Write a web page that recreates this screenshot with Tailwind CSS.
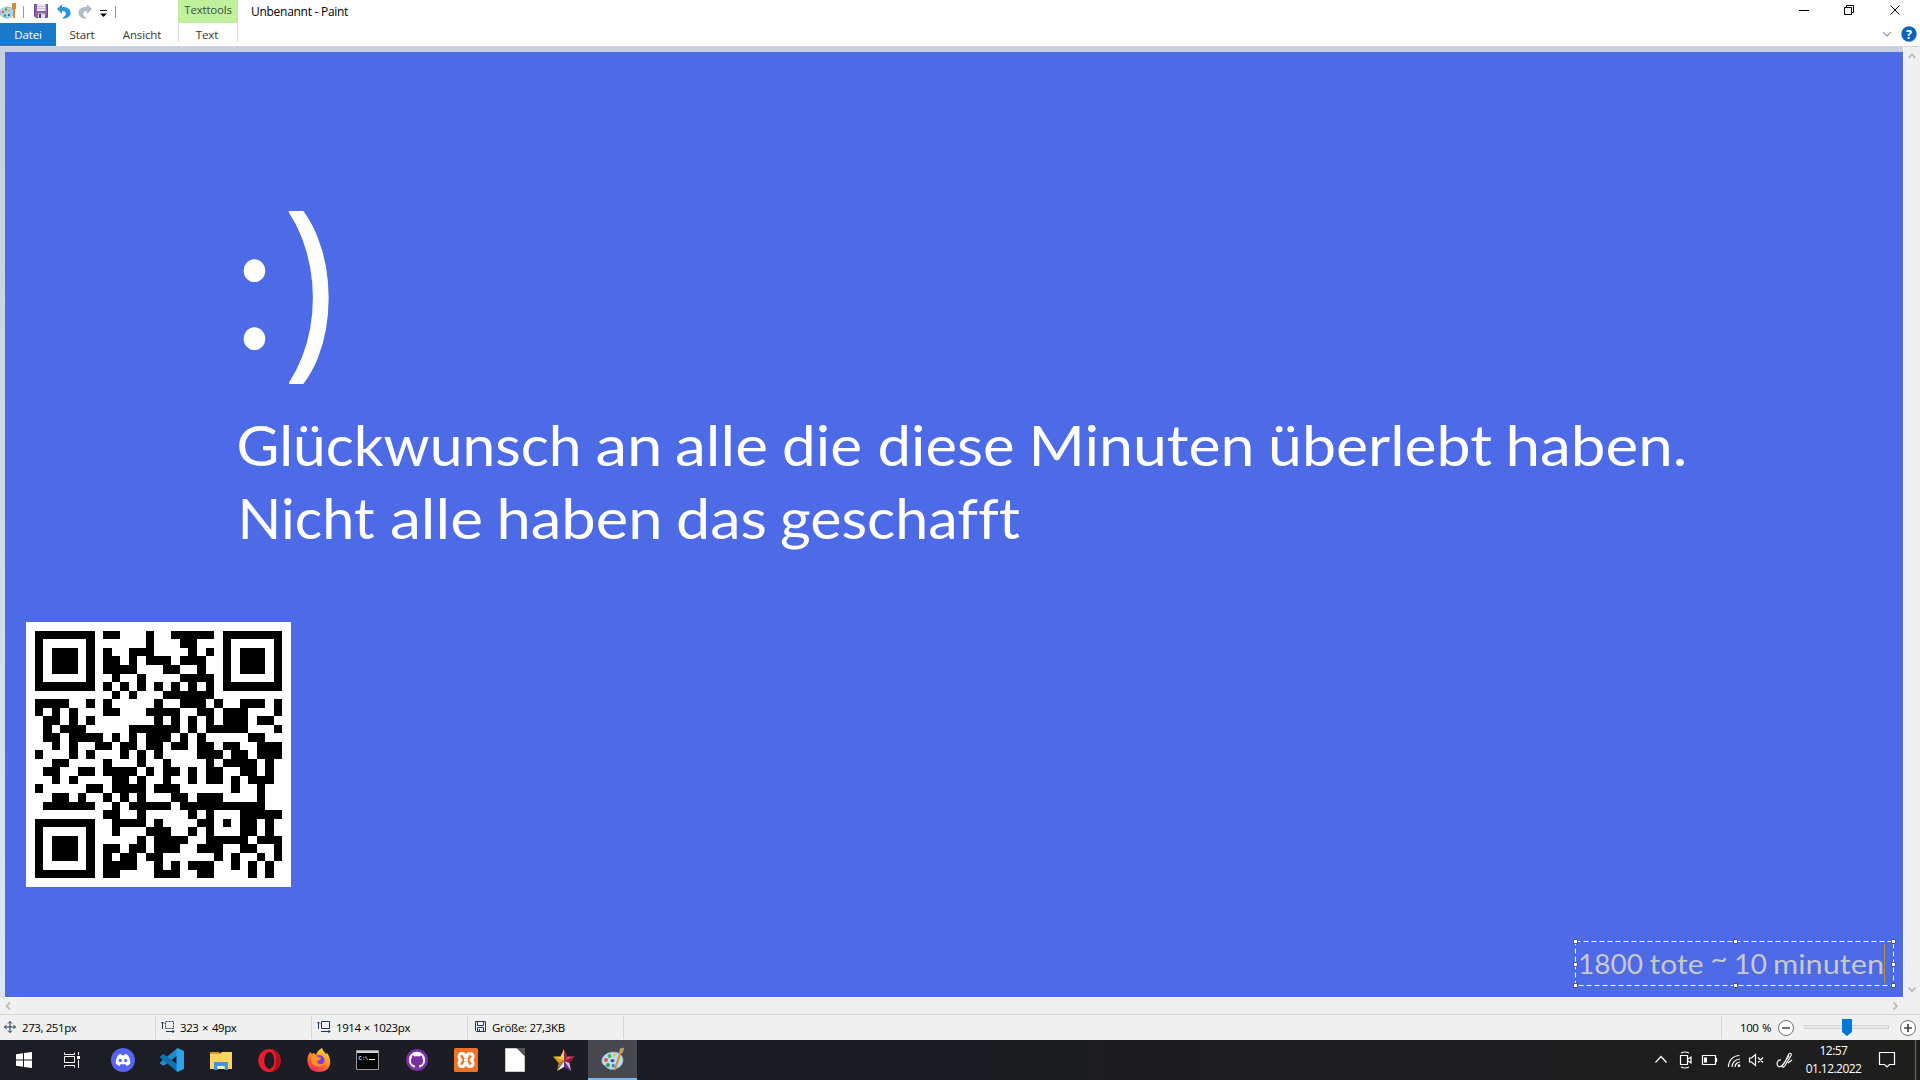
<!DOCTYPE html>
<html lang="de">
<head>
<meta charset="utf-8">
<title>Unbenannt - Paint</title>
<script src="https://cdn.jsdelivr.net/npm/@tailwindcss/browser@4"></script>
</head>
<body class="w-[1920px] h-[1080px] overflow-hidden flex flex-col bg-white font-['Open_Sans',sans-serif] text-[11.5px] tracking-[-0.15px] text-black">

<svg class="hidden">
  <symbol id="palette" viewBox="0 0 24 24">
    <path d="M12 5C6 5 .8 9 .8 14c0 3.500 2.500 4 4 5.500C6.500 21.500 9 23 13 22.200c5.500-1 9-4.500 9-9C22 8 18 5 12 5z" fill="#b9dcf0" stroke="#76a9c8" stroke-width=".7"/>
    <circle cx="5" cy="13" r="2" fill="#e8543f"/><circle cx="8.500" cy="9" r="1.900" fill="#52b152"/><circle cx="13.500" cy="8" r="1.700" fill="#f3c53c"/><circle cx="7" cy="18" r="2" fill="#3f9a4c"/><circle cx="12.300" cy="18.800" r="1.800" fill="#3a7fd0"/><ellipse cx="11.500" cy="13.600" rx="2" ry="1.600" fill="#31587a"/>
    <path d="M18.500 5.500l2 .8-6 17-1.700-.5z" fill="#e08a2c"/><path d="M18 6l1-4.500 4.500-1L21.500 6z" fill="#c99a6c"/>
  </symbol>
</svg>

<header class="flex h-[46px] shrink-0 bg-white">
  <div class="flex flex-col w-[178px]">
    <div class="flex items-center h-[23px]">
      <svg class="w-[17px] h-[17px]" viewBox="0 0 17 17">
        <path d="M7.500 4C3 4 0 7 0 10c0 2 1 3 2.500 3.500C4 15 6 15.500 8 15c4-.8 6-3 6-6s-3-5-6.500-5z" fill="#aed6ec" stroke="#6ba5c6" stroke-width=".7"/><circle cx="3" cy="9" r="1.300" fill="#df5a48"/><circle cx="6" cy="6.500" r="1.200" fill="#43a047"/><circle cx="9" cy="7.500" r="1.100" fill="#f0b429"/><circle cx="5" cy="12.500" r="1.200" fill="#4c9b3f"/><circle cx="9" cy="12" r="1.200" fill="#386fb5"/><path d="M12 0h4v6h-1v9h-2V6h-1z" fill="#df8732"/>
      </svg>
      <i class="w-px h-3 bg-[#999] ml-1.5 mr-2.5"></i>
      <svg class="w-[15px] h-[15px]" viewBox="0 0 15 15"><path d="M.5.5h13v13H2L.500 12z" fill="#8862a8" stroke="#6d4a8f"/><path d="M3 0h8.500v7H3z" fill="#eeeaf5"/><path d="M3 2.500h8.500M3 4.500h8.500" stroke="#c7bdd6"/><path d="M4 9.500h7V14H4z" fill="#dcdce6"/><path d="M5 10h2v4H5z" fill="#54396f"/></svg>
      <svg class="w-[14px] h-[15px] ml-2" viewBox="0 0 14 15"><path d="M0 5L5 .3V3c5.500 0 8.500 2 8.500 5.700 0 3.300-2 5.600-7.500 6v-1.500c2-1 2.800-2.200 2.800-3.700C8.800 7.800 7.500 7 5 7v3z" fill="#2796dd"/></svg>
      <svg class="w-[14px] h-[15px] ml-[7px]" viewBox="0 0 14 15"><path d="M14 5L9 .3V3C3.500 3 .5 5 .5 8.700c0 3.300 2 5.600 7.500 6v-1.500c-2-1-2.800-2.200-2.800-3.700C5.200 7.800 6.500 7 9 7v3z" fill="#adbccb"/></svg>
      <svg class="w-[7px] h-[8px] ml-[8px] mt-1" viewBox="0 0 7 8"><path d="M0 .5h7" stroke="#000"/><path d="M0 3.500h7L3.500 7z"/></svg>
      <i class="w-px h-3 bg-[#999] ml-2"></i>
    </div>
    <nav class="flex h-[23px] leading-[24px] text-[#333] text-center">
      <b class="w-14 font-normal bg-[#1979ca] text-white">Datei</b>
      <span class="w-[52px]">Start</span>
      <span class="w-[68px]">Ansicht</span>
    </nav>
  </div>
  <div class="w-[60px] text-center text-[#333]">
    <div class="h-[23px] leading-[20px] bg-[#c0f09c] text-[#44503e] tracking-[-0.2px]">Texttools</div>
    <div class="h-[19px] leading-[24px] border-x border-[#ddd] pr-0.5">Text</div>
  </div>
  <div class="pl-[13px] text-[12px] leading-[24px] tracking-[-0.28px]">Unbenannt - Paint</div>
  <div class="ml-auto flex flex-col w-[130px]">
    <div class="flex h-[22px]">
      <svg class="w-[130px] h-[22px]" viewBox="0 0 130 22" fill="none" stroke="#000"><path d="M9 10.500h10M54.500 7.500h7v7h-7zM56.500 7V5.500h7v7H62M100.500 5.500l9 9M109.500 5.500l-9 9"/></svg>
    </div>
    <svg class="w-[130px] h-[24px]" viewBox="0 0 130 24"><path d="M93 10l4 4 4-4" fill="none" stroke="#a0a0a0" stroke-width="1.300"/><circle cx="119" cy="12" r="7.700" fill="#0a64bd"/><text x="119" y="16.500" text-anchor="middle" font-size="12.500" font-weight="700" fill="#fff">?</text></svg>
  </div>
</header>

<main class="flex h-[952px] shrink-0 border-t border-[#d5d7db]">
  <div class="w-[5px] bg-linear-to-b from-[#c5cfe0] to-[#dce6f4]"></div>
  <div class="w-[1898px] pt-[5px] bg-[#c5cfe0] border-b border-white">
    <div class="relative w-full h-[945px] bg-[#4d6ae7]">
      <svg class="absolute inset-0 w-full h-full [font-variant-ligatures:none]" viewBox="5 52 1898 945" font-family="Lato, sans-serif" fill="#fff" letter-spacing="0">
        <text y="349" font-size="180"><tspan x="233" textLength="43" lengthAdjust="spacingAndGlyphs">:</tspan><tspan x="284.500" y="351.500" font-size="196" font-family="Open Sans" textLength="50" lengthAdjust="spacingAndGlyphs" stroke="#fff" stroke-width="2" stroke-linejoin="round">)</tspan></text>
        <g font-size="56">
          <text y="466"><tspan x="236.500" textLength="345" lengthAdjust="spacingAndGlyphs">Glückwunsch</tspan> <tspan x="595.500" textLength="67" lengthAdjust="spacingAndGlyphs">an</tspan> <tspan x="675" textLength="93" lengthAdjust="spacingAndGlyphs">alle</tspan> <tspan x="782" textLength="80" lengthAdjust="spacingAndGlyphs">die</tspan> <tspan x="877.500" textLength="137" lengthAdjust="spacingAndGlyphs">diese</tspan> <tspan x="1028.500" textLength="226" lengthAdjust="spacingAndGlyphs">Minuten</tspan> <tspan x="1268" textLength="224" lengthAdjust="spacingAndGlyphs">überlebt</tspan> <tspan x="1505.500" textLength="182" lengthAdjust="spacingAndGlyphs">haben.</tspan></text>
          <text y="539"><tspan x="237.500" textLength="137" lengthAdjust="spacingAndGlyphs">Nicht</tspan> <tspan x="390" textLength="93" lengthAdjust="spacingAndGlyphs">alle</tspan> <tspan x="496.500" textLength="166" lengthAdjust="spacingAndGlyphs">haben</tspan> <tspan x="676" textLength="91" lengthAdjust="spacingAndGlyphs">das</tspan> <tspan x="780" textLength="240" lengthAdjust="spacingAndGlyphs">geschafft</tspan></text>
        </g>
        <text y="973.500" font-size="27" fill="#c8c8c8"><tspan x="1578" textLength="65" lengthAdjust="spacingAndGlyphs">1800</tspan> <tspan x="1649.500" textLength="54" lengthAdjust="spacingAndGlyphs">tote</tspan> <tspan x="1710.500" y="967.500" textLength="17" lengthAdjust="spacingAndGlyphs">~</tspan> <tspan x="1734" y="973.500" textLength="33" lengthAdjust="spacingAndGlyphs">10</tspan> <tspan x="1773" textLength="111" lengthAdjust="spacingAndGlyphs">minuten</tspan></text>
        <path d="M1884.500 944v39" stroke="#b39634"/>
        <g fill="none"><path d="M1575.500 941.500h318v44h-318z" stroke="#0078d7"/><path d="M1575.500 941.500h318v44h-318z" stroke="#fff" stroke-dasharray="5 3"/></g>
        <path d="M1573.500 939.500h4v4h-4zM1733.500 939.500h4v4h-4zM1891.500 939.500h4v4h-4zM1573.500 962.500h4v4h-4zM1891.500 962.500h4v4h-4zM1573.500 983.500h4v4h-4zM1733.500 983.500h4v4h-4zM1891.500 983.500h4v4h-4z" stroke="#555"/>
      </svg>
      <svg class="absolute left-[21px] top-[570px] w-[265px] h-[265px] bg-white" viewBox="-1.040 -1.040 31.060 31.060" shape-rendering="crispEdges"><path id="qr" fill="#000"/></svg>
    </div>
  </div>
  <div class="flex flex-col items-center justify-between w-[17px] pt-[6px] pb-[5px] pr-px bg-[#f0f0f0] border-l border-white">
    <svg class="w-2 h-[7px]" viewBox="0 0 8 7" fill="none" stroke="#bfbfbf" stroke-width="2"><path d="M.500 5L4 1.500 7.500 5"/></svg>
    <svg class="w-2 h-[7px]" viewBox="0 0 8 7" fill="none" stroke="#bfbfbf" stroke-width="2"><path d="M.500 1.500L4 5l3.500-3.500"/></svg>
  </div>
</main>

<div class="flex items-center justify-between h-4 shrink-0 bg-[#f0f0f0] pl-[5px] pr-[21px] pb-px">
  <svg class="w-[7px] h-2" viewBox="0 0 7 8" fill="none" stroke="#bfbfbf" stroke-width="2"><path d="M5 .500L1.500 4 5 7.500"/></svg>
  <svg class="w-[7px] h-2" viewBox="0 0 7 8" fill="none" stroke="#bfbfbf" stroke-width="2"><path d="M1.500 .500L5 4 1.500 7.500"/></svg>
</div>

<div class="flex h-[26px] shrink-0 bg-[#f0f0f0] border-t border-[#d7d7d7] py-px tracking-[-0.4px] text-[11.5px] leading-[23px] whitespace-nowrap">
  <div class="flex w-[156px] pl-1 border-r border-[#d7d7d7]">
    <svg class="w-3 h-3 mt-[5px] mr-1.5" viewBox="0 0 12 12" fill="none" stroke="#1e395b"><path d="M.500 6h11M6 .500v11M4 2.500l2-2 2 2M4 9.500l2 2 2-2M2.500 4l-2 2 2 2M9.500 4l2 2-2 2"/></svg>273, 251px</div>
  <div class="flex w-[156px] pl-[5px] border-r border-[#d7d7d7] [word-spacing:1px]">
    <svg class="w-[14px] h-3 mt-[5px] mr-[5px]" viewBox="0 0 14 12" fill="none" stroke="#1e395b"><path d="M1.500 8V1M0 2.500L1.500 1 3 2.500M5 10.500h8M11.500 9l1.500 1.500-1.500 1.500"/><path d="M4.500.5h8v7h-8z" stroke-dasharray="2 1"/></svg>323 × 49px</div>
  <div class="flex w-[156px] pl-[5px] border-r border-[#d7d7d7] [word-spacing:0.5px]">
    <svg class="w-[14px] h-3 mt-[5px] mr-[5px]" viewBox="0 0 14 12" fill="none" stroke="#1e395b"><path d="M1.500 8V1M0 2.500L1.500 1 3 2.500M4 10.500h9M11.500 9l1.500 1.500-1.500 1.500M4.500.5h8v7h-8z"/></svg>1914 × 1023px</div>
  <div class="flex w-[156px] pl-[7px] border-r border-[#d7d7d7] tracking-[-0.3px]">
    <svg class="w-[11px] h-[11px] mt-[5px] mr-1.5" viewBox="0 0 11 11" fill="none" stroke="#1e395b"><path d="M.5.500h10v10h-9l-1-1zM2.500.500v4h6v-4M2.500 10.500v-4h6v4M4.500 8v2"/></svg>Größe: 27,3KB</div>
  <div class="ml-auto flex w-[199px] pl-[18px] border-l border-[#d7d7d7]"><span class="w-[37px] [word-spacing:1px]">100 %</span>
    <svg class="w-[144px] h-[22px] shrink-0 -ml-1" viewBox="0 0 144 22"><g fill="#fff" stroke="#707070"><circle cx="13" cy="12" r="7.500"/><circle cx="135" cy="12" r="7.500"/></g><path d="M9 12h8M131 12h8M135 8v8" stroke="#444" stroke-width="1.700"/><path d="M31.500 9.500h84v3h-84z" fill="#e7eaea" stroke="#d2d2d2"/><path d="M69 3h10v13l-5 4-5-4z" fill="#0078d7"/></svg>
  </div>
</div>

<footer class="flex h-10 shrink-0 bg-linear-to-r from-[#1c1d25] via-[#1c1d22] to-[#1e1e1d] text-white">
  <div class="w-[49px] flex items-center justify-center pr-px"><svg class="w-4 h-4" viewBox="0 0 16 16" fill="#fff"><path d="M0 2.200l7-1v6.300H0zM8 1l8-1v7.500H8zM0 8.500h7v6.300l-7-1zM8 8.500h8V16l-8-1z"/></svg></div>
  <div class="w-[49px] flex items-center justify-center pr-1"><svg class="w-4 h-4" viewBox="0 0 16 16" fill="none" stroke="#fff"><path d="M.500.500v2h10v-2M.500 15.500v-2h10v2M.500 4.500h10v6H.500zM14.500 0v3M14.500 8v8"/><path d="M13 4h3v3h-3z" fill="#fff" stroke="none"/></svg></div>
  <div class="w-[49px] flex items-center justify-center"><svg class="w-6 h-6" viewBox="0 0 24 24"><circle cx="12" cy="12" r="12" fill="#5865f2"/><path d="M7.500 6.800L10 6l.7 1.200h2.600L14 6l2.500.8c2 2.700 3 5.800 2.700 9C18 16.800 16.800 17.500 15.500 18l-1-1.700h-5l-1 1.700c-1.300-.5-2.500-1.200-3.700-2.200-.3-3.200.7-6.300 2.700-9z" fill="#fff"/><ellipse cx="9.300" cy="12.500" rx="1.600" ry="1.800" fill="#5865f2"/><ellipse cx="14.700" cy="12.500" rx="1.600" ry="1.800" fill="#5865f2"/></svg></div>
  <div class="w-[49px] flex items-center justify-center"><svg class="w-6 h-6" viewBox="0 0 24 24"><path d="M17.500 0v7.500L3.500 18 0 15.500v-1z" fill="#2489ca"/><path d="M0 8.500L3.500 6l14 10.500V24L0 9.500z" fill="#1070b3"/><path d="M17.500 0L24 3v18l-6.500 3-1-1.500v-21z" fill="#2ba5ee"/></svg></div>
  <div class="w-[49px] flex items-center justify-center"><svg class="w-[22px] h-[19px]" viewBox="0 0 22 19"><path d="M0 1h9l1.500 2H0z" fill="#dc9a14"/><path d="M0 3h9.500L12 1h10v17H0z" fill="#fcd462"/><path d="M4 11h14v8h-3.500v-4h-7v4H4z" fill="#3d95dc"/><path d="M7.500 15h7v3h-7z" fill="#fff0b5"/></svg></div>
  <div class="w-[49px] flex items-center justify-center"><svg class="w-[23px] h-[23px]" viewBox="0 0 23 23"><ellipse cx="11.500" cy="11.500" rx="11.200" ry="11.500" fill="#ec1b2d"/><path d="M12 0c14 1 14 22 0 23 4-1 6-5 6-11.500S16 1 12 0z" fill="#b10e1c"/><ellipse cx="11.300" cy="11.500" rx="5" ry="8.500" fill="#1c1d24"/></svg></div>
  <div class="w-[49px] flex items-center justify-center"><svg class="w-6 h-6" viewBox="0 0 24 24"><defs><linearGradient id="fox" x1=".8" x2=".3" y2="1"><stop stop-color="#ffe03a"/><stop offset=".5" stop-color="#ff8a20"/><stop offset="1" stop-color="#f8205d"/></linearGradient></defs><path d="M1 8l2-4 2 2 2-1 2 2c1-4 4-6 6-7 1 3 3 4 4 6l1-1c6 7 4 19-8 19C2 24-1 15 1 8z" fill="url(#fox)"/><circle cx="12" cy="12.500" r="5.500" fill="#7543e3"/><path d="M4 9c3-2 5-1 7 0l3 1c0 2-3 2-4 4 1 3 6 3 8 0-1 5-12 7-14-2z" fill="#ff9024"/></svg></div>
  <div class="w-[49px] flex items-center justify-center"><svg class="w-[23px] h-5" viewBox="0 0 23 20"><path d="M.5.500h22v19H.500z" fill="#050505" stroke="#9a9a9a"/><path d="M1 1h21v2H1z" fill="#cdd4da"/><text x="2.500" y="9.500" font-size="5.500" font-weight="700" fill="#ddd" font-family="Liberation Mono, monospace">C:\</text><path d="M13 9.500h6" stroke="#eee"/></svg></div>
  <div class="w-[49px] flex items-center justify-center"><svg class="w-[22px] h-[22px]" viewBox="0 0 22 22"><circle cx="11" cy="11" r="11" fill="#7a2fa5"/><circle cx="11" cy="11" r="8.200" fill="#fff"/><path d="M8.800 19.200v-3c-3-.5-4-2.200-4-4.500 0-1.200.4-2 1-2.700-.2-1 0-1.800.3-2.500 1 0 2 .6 2.600 1.100 1.500-.4 3-.4 4.600 0 .6-.5 1.600-1.100 2.600-1.100.3.700.5 1.500.3 2.500.6.700 1 1.500 1 2.700 0 2.300-1 4-4 4.500v3z" fill="#7a2fa5"/></svg></div>
  <div class="w-[49px] flex items-center justify-center"><svg class="w-6 h-6" viewBox="0 0 24 24"><rect width="24" height="24" rx="1.500" fill="#f17322"/><path d="M8 5.500c2 0 3 1.500 3 3.500h2c0-2 1-3.500 3-3.500 3.500 0 4 4.500 1 6.500 3 2 2.500 6.500-1 6.500-2 0-3-1.500-3-3.500h-2c0 2-1 3.500-3 3.500-3.500 0-4-4.500-1-6.500-3-2-2.500-6.500 1-6.500z" fill="#f17322" stroke="#fff" stroke-width="3" stroke-linejoin="round"/><path d="M10 12h4" stroke="#fff" stroke-width="2.500"/></svg></div>
  <div class="w-[49px] flex items-center justify-center"><svg class="w-5 h-6" viewBox="0 0 20 24"><path d="M.500.500h12l7 7v16H.500z" fill="#fff" stroke="#ccc"/><path d="M11.500 0H20v8.500z" fill="#555"/></svg></div>
  <div class="w-[49px] flex items-center justify-center"><svg class="w-[22px] h-[22px]" viewBox="0 0 22 22"><path d="M11 0v12L7.500 7.500z" fill="#f4d35a"/><path d="M11 0l3.500 7.500L11 12z" fill="#a52340"/><path d="M14.500 7.500H22L11 12z" fill="#e2476b"/><path d="M22 7.500L16.500 14 11 12z" fill="#8d1738"/><path d="M16.500 14L18 22l-7-10z" fill="#d9b6e8"/><path d="M18 22l-7-4v-6z" fill="#5e3591"/><path d="M11 18l-7 4 7-10z" fill="#e8e6ef"/><path d="M4 22l1.500-8L11 12z" fill="#a57c2b"/><path d="M5.500 14L0 7.500 11 12z" fill="#e89b1c"/><path d="M0 7.500h7.500L11 12z" fill="#ffd63c"/></svg></div>
  <div class="w-[49px] flex items-center justify-center bg-[#47484e] border-b-2 border-[#76b9ed]"><svg class="w-6 h-6"><use href="#palette"/></svg></div>
  <div class="ml-auto flex">
    <svg class="w-[146px] h-10" viewBox="1650 0 146 40" fill="none" stroke="#fff" stroke-width="1.200"><path d="M1655.500 22.500l5.500-6 5.500 6"/><path d="M1680.500 15.500h7v9h-7zM1688 19l3-2v6l-3-2M1681 13q4-2 8 0M1681 27q4 2 8 0"/><path d="M1702.500 15.500h13v9h-13zM1716.500 18v4"/><path d="M1704 17.500h3v5h-3z" fill="#fff" stroke="none"/><path d="M1728.500 27a11 11 0 0 1 11-11.500M1732 27a8 8 0 0 1 8-8M1735 27a5 5 0 0 1 5-5"/><circle cx="1739" cy="25.700" r="1.400" fill="#fff" stroke="none"/><path d="M1749.500 18h2l4-3.500v11l-4-3.500h-2zM1758 17.500l5 5M1763 17.500l-5 5"/><path d="M1781 20c-4-1-5 5-2.500 6.500 4 2 8-7 9.500-11 1-3 4-3 3 0l-6 10c-2 3-4 1-2-1l6-9M1788 23l4-3"/></svg>
    <div class="w-[75px] text-center text-[12px] tracking-[-0.55px] leading-[18px] pt-[2px]">12:57<br>01.12.2022</div>
    <svg class="w-[49px] h-10" viewBox="1871 0 49 40" fill="none" stroke="#fff" stroke-width="1.200"><path d="M1879.500 12.500h15v12h-5l-2.500 2.500-2.500-2.500h-5z"/><path d="M1915.500 0v40" stroke="#66666a"/></svg>
  </div>
</footer>

<script>
// Module matrix of the QR code, one string per row
const rows = [
  "11111110110001" + "001111101111111",
  "10000010000001" + "000110001000001",
  "10111010100111" + "000010101011101",
  "10111010110101" + "110111001011101",
  "10111010111100" + "011001001011101",
  "10000010010010" + "000111101000001",
  "11111110101010" + "101010101111111",
  "00000000010100" + "011111100000000",
  "11110010100000" + "100111010011101",
  "10101000110001" + "111001101110001",
  "01101010000000" + "101010101110110",
  "01011100000111" + "111010111110001",
  "01101111010101" + "110101000001100",
  "00101001101101" + "101101101100111",
  "10001010001010" + "100001110110111",
  "00110000100010" + "010000101111010",
  "01100110111101" + "011010110011010",
  "00101000011010" + "010010110101110",
  "10000011011110" + "111000000100100",
  "00110100101010" + "001101110000100",
  "01111110010111" + "110111111111100",
  "00000000110010" + "000010100011111",
  "11111110011110" + "100001101011010",
  "10000010010001" + "110010100011010",
  "10111010000010" + "111100111110111",
  "10111010110110" + "111001110011001",
  "10111010101101" + "100000010100101",
  "10000010111100" + "101011100101010",
  "11111110110000" + "111001100001010"
];
document.getElementById("qr").setAttribute("d",
  rows.map((r, y) => [...r].map((c, x) => c === "1" ? `M${x} ${y}h1v1h-1z` : "").join("")).join(""));
</script>
</body>
</html>
